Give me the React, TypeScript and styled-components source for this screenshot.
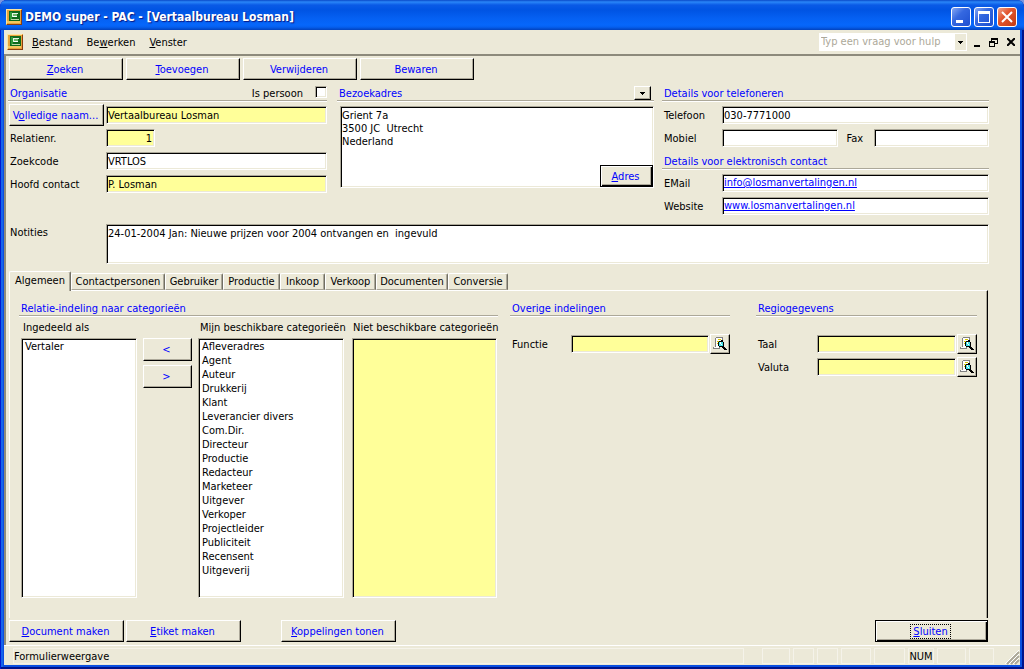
import React from 'react';
import styled, { createGlobalStyle, css } from 'styled-components';

const face = '#ece9d8';
const shade = '#aca899';
const yellow = '#ffff99';
const link = '#0000ff';

const GlobalStyle = createGlobalStyle`
  *, *::before, *::after { box-sizing: border-box; }
  body {
    margin: 0;
    background: #7a96df;
    color: #000;
    font: 11px/14px "DejaVu Sans Condensed", "Noto Sans", sans-serif;
  }
  button, input, select, textarea { font: inherit; color: inherit; margin: 0; border-radius: 0; }
  h1, h2 { margin: 0; font-weight: normal; font-size: inherit; }
`;

const sunken = css`
  border: 1px solid;
  border-color: ${shade} #fff #fff ${shade};
  box-shadow: inset 1px 1px 0 #000, inset -1px -1px 0 ${face};
`;

const raised = css`
  border: 1px solid;
  border-color: #fff #000 #000 #fff;
  box-shadow: inset -1px -1px 0 ${shade};
`;

const Window = styled.div`
  display: flex;
  flex-direction: column;
  min-height: 100vh;
  padding: 0 4px 4px;
  background: #0a4fe0;
  border-radius: 7px 7px 0 0;
  box-shadow: inset 1px 0 0 #0019cf, inset -2px -2px 0 #00138c, inset 3px 0 0 #1664ec;
`;

const TitleBar = styled.header`
  display: flex;
  align-items: center;
  height: 30px;
  margin: 0 -4px;
  padding: 3px 7px 0 6px;
  border-radius: 7px 7px 0 0;
  background: linear-gradient(#0a49c8 0, #2a86f8 2px, #0a5ae6 5px, #0054e3 10px, #0560f2 18px, #0667fb 25px, #0560f0 27px, #0242bd 30px);
`;

const Title = styled.h1`
  flex: 1;
  margin-left: 3px;
  color: #fff;
  font: bold 12px/20px "DejaVu Sans Condensed", "Noto Sans", sans-serif;
  text-shadow: 1px 1px 1px #0a1883;
`;

const CaptionButtons = styled.div`
  display: flex;
  gap: 3px;
`;

const CaptionButton = styled.button<{ $danger?: boolean }>`
  width: 20px;
  height: 20px;
  padding: 0;
  border: 1px solid #fff;
  border-radius: 3px;
  background: ${p => p.$danger
    ? 'linear-gradient(135deg, #f0a48c, #e2562f 40%, #c33a12)'
    : 'linear-gradient(135deg, #86a8f4, #3568e0 40%, #1d4fd0)'};
  svg { display: block; }
`;

const MenuBar = styled.nav`
  display: flex;
  align-items: center;
  height: 24px;
  padding: 0 1px 0 3px;
  background: ${face};
`;

const MenuItems = styled.div`
  display: flex;
  flex: 1;
  gap: 14px;
  margin-left: 9px;
`;

const MenuItem = styled.button`
  padding: 1px 0 0;
  border: 0;
  background: none;
`;

const HelpBox = styled.div`
  display: flex;
  width: 148px;
  height: 18px;
  margin-right: 1px;
  padding: 1px;
  background: #fff;
`;

const HelpInput = styled.input`
  flex: 1;
  min-width: 0;
  padding: 0 1px;
  border: 0;
  background: none;
  &::placeholder { color: ${shade}; opacity: 1; }
`;

const HelpArrow = styled.button`
  width: 11px;
  padding: 0;
  border: 0;
  background: ${face};
  svg { display: block; margin: auto; }
`;

const MdiButton = styled.button`
  width: 17px;
  height: 16px;
  padding: 0;
  border: 0;
  background: none;
  svg { display: block; margin: auto; }
`;

const Form = styled.main`
  display: flex;
  flex: 1;
  flex-direction: column;
  padding: 2px 31px 3px 2px;
  background: ${face};
  border-top: 2px solid #8d8a7c;
  border-left: 2px solid #8d8a7c;
`;

const Toolbar = styled.div`
  display: flex;
  gap: 3px;
  padding-left: 1px;
`;

const PushButton = styled.button<{ $width: number; $default?: boolean }>`
  ${raised}
  width: ${p => p.$width}px;
  height: 22px;
  padding: 1px 2px 0 0;
  background: ${face};
  color: ${link};
  white-space: nowrap;
  ${p => p.$default && css`
    border-color: #000;
    box-shadow: inset 1px 1px 0 #fff, inset -1px -1px 0 #000, inset -2px -2px 0 ${shade};
  `}
`;

const FocusMark = styled.span`
  padding: 0 2px;
  outline: 1px dotted #000;
`;

const Summary = styled.div`
  display: grid;
  grid-template-columns: 319fr 319fr 327fr;
  column-gap: 8px;
  margin-top: 2px;
`;

const Section = styled.section<{ $left?: number; $right?: number }>`
  display: flex;
  flex-direction: column;
  min-width: 0;
  padding-left: ${p => p.$left ?? 0}px;
  padding-right: ${p => p.$right ?? 0}px;
`;

const SectionHead = styled.div`
  display: flex;
  justify-content: space-between;
  height: 20px;
  margin-bottom: 2px;
  padding: 4px 0 0 2px;
  border-bottom: 1px solid #fff;
  box-shadow: inset 0 -1px 0 ${shade};
  color: ${link};
`;

const SectionTitle = styled.h2`
  line-height: 16px;
  white-space: nowrap;
`;

const CheckLabel = styled.label`
  display: flex;
  gap: 12px;
  color: #000;
  line-height: 16px;
`;

const CheckBox = styled.input`
  ${sunken}
  appearance: none;
  width: 12px;
  height: 12px;
  background: #fff;
`;

const DropButton = styled.button`
  ${raised}
  width: 17px;
  height: 14px;
  margin-right: 3px;
  padding: 0;
  background: ${face};
  svg { display: block; margin: auto; }
`;

const Row = styled.div<{ $label: number }>`
  display: grid;
  grid-template-columns: ${p => p.$label}px 1fr;
  align-items: center;
  height: 23px;
  padding-bottom: 1px;
`;

const Label = styled.label`
  padding: 1px 0 0 2px;
  white-space: nowrap;
`;

const LabelSlot = styled.div`
  padding-left: 1px;
`;

const Field = styled.input<{ $yellow?: boolean; $width?: number; $right?: boolean }>`
  ${sunken}
  width: ${p => (p.$width ? `${p.$width}px` : '100%')};
  min-width: 0;
  height: 18px;
  padding: 1px 2px 0 1px;
  background: ${p => (p.$yellow ? yellow : '#fff')};
  text-align: ${p => (p.$right ? 'right' : 'left')};
`;

const LinkField = styled.div`
  ${sunken}
  height: 18px;
  padding: 1px 2px 1px 1px;
  background: #fff;
  a { color: ${link}; }
`;

const PhonePair = styled.div`
  display: grid;
  grid-template-columns: 1fr 36px 1fr;
  align-items: center;
  label { padding-left: 9px; }
`;

const Memo = styled.textarea`
  ${sunken}
  display: block;
  width: 100%;
  height: 100%;
  padding: 2px 1px;
  background: #fff;
  line-height: 13px;
  resize: none;
  overflow: hidden;
`;

const AddressBox = styled.div`
  position: relative;
  height: 82px;
  margin: 2px 0 0 3px;
`;

const AddressAction = styled.div`
  position: absolute;
  right: 1px;
  bottom: 1px;
`;

const Notes = styled.div`
  display: grid;
  grid-template-columns: 98px 1fr;
  height: 40px;
  margin-top: 6px;
  label { padding-top: 2px; }
`;

const TabStrip = styled.div`
  display: flex;
  align-items: flex-end;
  height: 20px;
  margin-top: 6px;
  padding-left: 1px;
`;

const Tab = styled.button<{ $width: number; $active?: boolean }>`
  position: relative;
  width: ${p => p.$width}px;
  height: ${p => (p.$active ? 20 : 17)}px;
  margin-bottom: ${p => (p.$active ? -1 : 0)}px;
  padding: 0 0 ${p => (p.$active ? 2 : 0)}px;
  border: 1px solid;
  border-color: #fff #716f64 ${shade} #fff;
  border-bottom-width: ${p => (p.$active ? 0 : 1)}px;
  border-radius: 2px 2px 0 0;
  box-shadow: inset -1px 0 0 ${shade};
  background: ${face};
  white-space: nowrap;
`;

const TabPanel = styled.div`
  display: grid;
  flex: 1;
  grid-template-columns: 479fr 234fr 221fr;
  column-gap: 12px;
  margin: 0 1px;
  padding: 6px 10px 20px 9px;
  border: solid;
  border-width: 1px 1px 0 1px;
  border-color: #fff #000 #fff #fff;
  box-shadow: inset -1px 0 0 ${shade};
`;

const Categories = styled.div`
  display: grid;
  flex: 1;
  grid-template-columns: minmax(0, 116fr) 49px minmax(0, 146fr) minmax(0, 147fr);
  grid-template-rows: 17px 1fr;
  column-gap: 6px;
  padding: 2px 1px 0 2px;
`;

const ListLabel = styled.label<{ $indent?: number }>`
  padding-left: ${p => p.$indent ?? 2}px;
  white-space: nowrap;
`;

const ListBox = styled.select<{ $yellow?: boolean; $indent?: number }>`
  ${sunken}
  appearance: none;
  min-width: 0;
  height: 100%;
  margin-left: ${p => p.$indent ?? 0}px;
  padding: 1px 2px;
  background: ${p => (p.$yellow ? yellow : '#fff')};
  overflow: hidden;
  option {
    height: 14px;
    min-height: 14px;
    padding: 0 1px;
    line-height: 14px;
  }
`;

const MoveButtons = styled.div`
  display: flex;
  flex-direction: column;
  gap: 4px;
  button { height: 23px; }
`;

const Lookups = styled.div`
  padding-top: 14px;
`;

const LookupField = styled.div`
  display: grid;
  grid-template-columns: 1fr 20px;
  align-items: center;
  column-gap: 1px;
`;

const LookupButton = styled.button`
  ${raised}
  width: 20px;
  height: 20px;
  padding: 0;
  background: ${face};
  svg { display: block; margin: auto; }
`;

const Actions = styled.footer`
  display: flex;
  gap: 2px;
  margin-top: 2px;
  padding: 0 1px;
  button:nth-child(3) { margin-left: 38px; }
  button:last-child { margin-left: auto; }
`;

const StatusBar = styled.div`
  display: flex;
  align-items: center;
  gap: 3px;
  height: 20px;
  padding-left: 9px;
  border-top: 1px solid #fff;
  background: ${face};
`;

const StatusCell = styled.div<{ $width?: number; $gap?: number }>`
  flex: ${p => (p.$width ? `0 0 ${p.$width}px` : '1')};
  height: 16px;
  margin-left: ${p => p.$gap ?? 0}px;
  border: 1px solid #f5f3ea;
  line-height: 16px;
  text-align: ${p => (p.$width ? 'center' : 'left')};
`;

const AppIcon = () => (
  <svg width="16" height="16" viewBox="0 0 16 16" shapeRendering="crispEdges" aria-hidden="true">
    <path fill="#e8a33a" d="M0 0h16v16H0z" />
    <path fill="#fbe6a0" d="M0 0h15v1H1v14H0z" />
    <path fill="#8a3d10" d="M15 1h1v15H1v-1h14z" />
    <path fill="#f4c860" d="M1 12h13v2H1z" />
    <path fill="#0f6a1c" d="M3 2h11v10H3z" />
    <path fill="#2f9a3a" d="M4 3h2v8H4z" />
    <path fill="#e6f4e2" d="M6 4h6v1H6zM6 5h1v3H6z" />
    <path fill="#6fb96c" d="M7 5h4v2H7z" />
    <path fill="#fff" d="M7 7h4v1H7z" />
    <path fill="#b8d8a8" d="M5 10h8v1H5z" />
  </svg>
);

const DownArrow = () => (
  <svg width="5" height="3" viewBox="0 0 5 3" shapeRendering="crispEdges" aria-hidden="true">
    <path d="M0 0h5v1H4v1H3v1H2V2H1V1H0z" />
  </svg>
);

const LookupIcon = () => (
  <svg width="14" height="14" viewBox="0 0 14 14" shapeRendering="crispEdges" aria-hidden="true">
    <path fill="#808080" d="M3 0h7v1H3zM2 1h1v9H2zM0 10h7v2H0zM9 1h1v2H9z" />
    <path fill="#fff" d="M3 1h6v9H3zM1 10h5v1H1z" />
    <path fill="#d8c800" d="M5 2h3v1H5zM4 4h3v1H4zM4 6h1v1H4z" />
    <path fill="#000" d="M6 4h4v1H6zM5 5h1v4H5zM10 5h1v4h-1zM6 9h5v1H6zM9 10h3v1H9zM10 11h3v1h-3zM11 12h3v1h-3zM8 3h2v1H8z" />
    <path fill="#40e0e8" d="M6 5h4v4H6z" />
    <path fill="#fff" d="M7 5h1v2H7zM8 7h1v1H8z" />
  </svg>
);

const Key = ({ text, at }: { text: string; at: number }) => (
  <>{text.slice(0, at)}<u>{text[at]}</u>{text.slice(at + 1)}</>
);

const tabs: [string, number][] = [
  ['Algemeen', 62], ['Contactpersonen', 94], ['Gebruiker', 58], ['Productie', 57],
  ['Inkoop', 45], ['Verkoop', 51], ['Documenten', 72], ['Conversie', 60],
];

const categories = [
  'Afleveradres', 'Agent', 'Auteur', 'Drukkerij', 'Klant', 'Leverancier divers', 'Com.Dir.',
  'Directeur', 'Productie', 'Redacteur', 'Marketeer', 'Uitgever', 'Verkoper', 'Projectleider',
  'Publiciteit', 'Recensent', 'Uitgeverij',
];

const statusCells: [number, string][] = [
  [28, ''], [21, ''], [21, ''], [30, ''], [31, ''], [26, 'NUM'], [29, ''], [25, ''],
];

const Lookup = ({ id, label }: { id: string; label: string }) => (
  <Row $label={61}>
    <Label htmlFor={id}>{label}</Label>
    <LookupField>
      <Field id={id} $yellow />
      <LookupButton aria-label={`${label} zoeken`}><LookupIcon /></LookupButton>
    </LookupField>
  </Row>
);

export default function App() {
  return (
    <>
      <GlobalStyle />
      <Window>
        <TitleBar>
          <AppIcon />
          <Title>DEMO super - PAC - [Vertaalbureau Losman]</Title>
          <CaptionButtons>
            <CaptionButton aria-label="Minimaliseren">
              <svg width="18" height="18"><path fill="#fff" d="M4 12h7v3H4z" /></svg>
            </CaptionButton>
            <CaptionButton aria-label="Maximaliseren">
              <svg width="18" height="18"><path fill="#fff" fillRule="evenodd" d="M3 3h12v12H3zM4 6v8h10V6z" /></svg>
            </CaptionButton>
            <CaptionButton $danger aria-label="Sluiten">
              <svg width="18" height="18"><path stroke="#fff" strokeWidth="2" d="M4 4l10 10M14 4L4 14" /></svg>
            </CaptionButton>
          </CaptionButtons>
        </TitleBar>

        <MenuBar>
          <AppIcon />
          <MenuItems>
            <MenuItem><Key text="Bestand" at={0} /></MenuItem>
            <MenuItem><Key text="Bewerken" at={2} /></MenuItem>
            <MenuItem><Key text="Venster" at={0} /></MenuItem>
          </MenuItems>
          <HelpBox>
            <HelpInput aria-label="Hulp" placeholder="Typ een vraag voor hulp" />
            <HelpArrow aria-label="Vragen tonen"><DownArrow /></HelpArrow>
          </HelpBox>
          <MdiButton aria-label="Formulier minimaliseren">
            <svg width="10" height="10"><path d="M2 8h6v2H2z" /></svg>
          </MdiButton>
          <MdiButton aria-label="Formulier herstellen">
            <svg width="9" height="9" shapeRendering="crispEdges">
              <path fillRule="evenodd" d="M2 0h7v6H6V5h2V2H3v1H2zM0 3h6v6H0zM1 5v3h4V5z" />
            </svg>
          </MdiButton>
          <MdiButton aria-label="Formulier sluiten">
            <svg width="8" height="8"><path stroke="#000" strokeWidth="2" d="M0 0l8 8M8 0L0 8" /></svg>
          </MdiButton>
        </MenuBar>

        <Form>
          <Toolbar>
            <PushButton $width={114}><Key text="Zoeken" at={0} /></PushButton>
            <PushButton $width={114}><Key text="Toevoegen" at={0} /></PushButton>
            <PushButton $width={114}>Verwijderen</PushButton>
            <PushButton $width={114}>Bewaren</PushButton>
          </Toolbar>

          <Summary>
            <Section>
              <SectionHead>
                <SectionTitle>Organisatie</SectionTitle>
                <CheckLabel>Is persoon<CheckBox type="checkbox" /></CheckLabel>
              </SectionHead>
              <Row $label={98}>
                <LabelSlot>
                  <PushButton $width={95}><Key text="Volledige naam..." at={1} /></PushButton>
                </LabelSlot>
                <Field aria-label="Volledige naam" $yellow defaultValue="Vertaalbureau Losman" />
              </Row>
              <Row $label={98}>
                <Label htmlFor="nr">Relatienr.</Label>
                <Field id="nr" $yellow $right $width={49} defaultValue="1" />
              </Row>
              <Row $label={98}>
                <Label htmlFor="code">Zoekcode</Label>
                <Field id="code" defaultValue="VRTLOS" />
              </Row>
              <Row $label={98}>
                <Label htmlFor="contact">Hoofd contact</Label>
                <Field id="contact" $yellow defaultValue="P. Losman" />
              </Row>
            </Section>

            <Section $left={2}>
              <SectionHead>
                <SectionTitle>Bezoekadres</SectionTitle>
                <DropButton aria-label="Soort adres"><DownArrow /></DropButton>
              </SectionHead>
              <AddressBox>
                <Memo aria-label="Bezoekadres" defaultValue={'Grient 7a\n3500 JC  Utrecht\nNederland'} />
                <AddressAction>
                  <PushButton $width={53} $default><Key text="Adres" at={0} /></PushButton>
                </AddressAction>
              </AddressBox>
            </Section>

            <Section>
              <SectionHead><SectionTitle>Details voor telefoneren</SectionTitle></SectionHead>
              <Row $label={60}>
                <Label htmlFor="tel">Telefoon</Label>
                <Field id="tel" defaultValue="030-7771000" />
              </Row>
              <Row $label={60}>
                <Label htmlFor="mobile">Mobiel</Label>
                <PhonePair>
                  <Field id="mobile" />
                  <Label htmlFor="fax">Fax</Label>
                  <Field id="fax" />
                </PhonePair>
              </Row>
              <SectionHead><SectionTitle>Details voor elektronisch contact</SectionTitle></SectionHead>
              <Row $label={60}>
                <Label as="span">EMail</Label>
                <LinkField><a href="mailto:info@losmanvertalingen.nl">info@losmanvertalingen.nl</a></LinkField>
              </Row>
              <Row $label={60}>
                <Label as="span">Website</Label>
                <LinkField><a href="http://www.losmanvertalingen.nl">www.losmanvertalingen.nl</a></LinkField>
              </Row>
            </Section>
          </Summary>

          <Notes>
            <Label htmlFor="notes">Notities</Label>
            <Memo id="notes" defaultValue="24-01-2004 Jan: Nieuwe prijzen voor 2004 ontvangen en  ingevuld" />
          </Notes>

          <TabStrip role="tablist">
            {tabs.map(([name, width], i) => (
              <Tab key={name} role="tab" aria-selected={i === 0} $active={i === 0} $width={width}>{name}</Tab>
            ))}
          </TabStrip>
          <TabPanel role="tabpanel">
            <Section>
              <SectionHead><SectionTitle>Relatie-indeling naar categorieën</SectionTitle></SectionHead>
              <Categories>
                <ListLabel htmlFor="assigned">Ingedeeld als</ListLabel>
                <span />
                <ListLabel htmlFor="mine">Mijn beschikbare categorieën</ListLabel>
                <ListLabel htmlFor="others" $indent={3}>Niet beschikbare categorieën</ListLabel>
                <ListBox id="assigned" multiple><option>Vertaler</option></ListBox>
                <MoveButtons>
                  <PushButton $width={49}>&lt;</PushButton>
                  <PushButton $width={49}>&gt;</PushButton>
                </MoveButtons>
                <ListBox id="mine" multiple>
                  {categories.map(c => <option key={c}>{c}</option>)}
                </ListBox>
                <ListBox id="others" multiple $yellow $indent={2} />
              </Categories>
            </Section>
            <Section $right={14}>
              <SectionHead><SectionTitle>Overige indelingen</SectionTitle></SectionHead>
              <Lookups><Lookup id="functie" label="Functie" /></Lookups>
            </Section>
            <Section>
              <SectionHead><SectionTitle>Regiogegevens</SectionTitle></SectionHead>
              <Lookups>
                <Lookup id="taal" label="Taal" />
                <Lookup id="valuta" label="Valuta" />
              </Lookups>
            </Section>
          </TabPanel>

          <Actions>
            <PushButton $width={115}><Key text="Document maken" at={0} /></PushButton>
            <PushButton $width={115}><Key text="Etiket maken" at={0} /></PushButton>
            <PushButton $width={115}><Key text="Koppelingen tonen" at={0} /></PushButton>
            <PushButton $width={113} $default><FocusMark><Key text="Sluiten" at={0} /></FocusMark></PushButton>
          </Actions>
        </Form>

        <StatusBar>
          <StatusCell>Formulierweergave</StatusCell>
          {statusCells.map(([width, text], i) => (
            <StatusCell key={i} $width={width} $gap={i === 0 ? 15 : 0}>{text}</StatusCell>
          ))}
          <svg width="23" height="18" aria-hidden="true">
            <path stroke={shade} strokeWidth="2" d="M10 17L22 5M14 17l8-8M18 17l4-4" />
            <path stroke="#fff" d="M8 17L22 3M12 17l10-10M16 17l6-6" />
          </svg>
        </StatusBar>
      </Window>
    </>
  );
}
